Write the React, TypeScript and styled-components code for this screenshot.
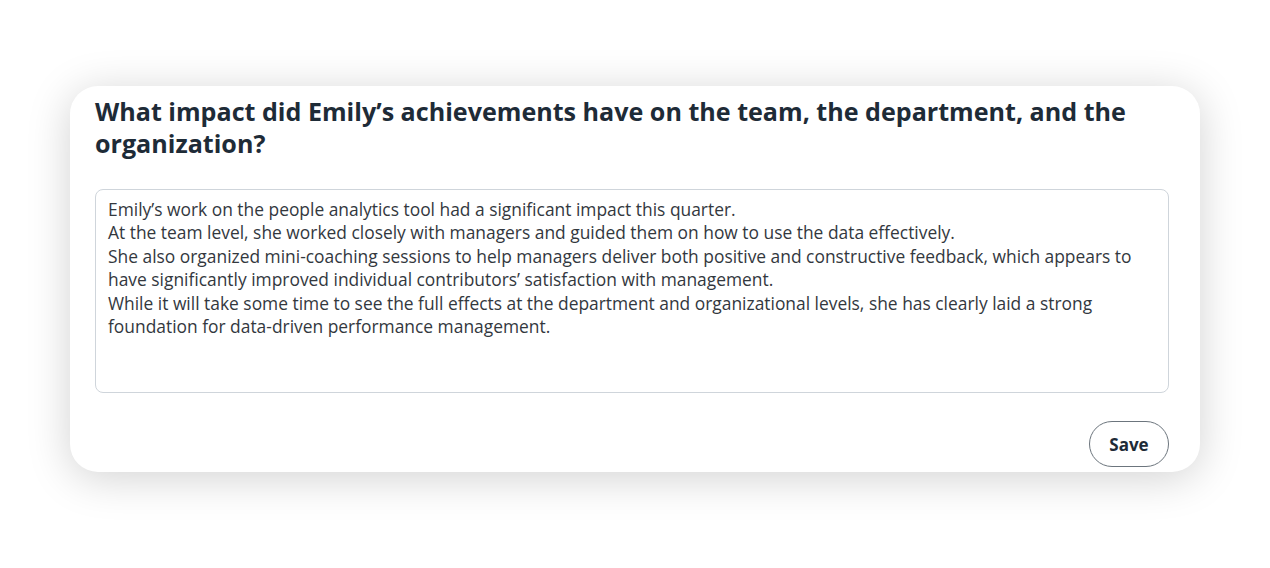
import styled, { createGlobalStyle } from "styled-components";

const GlobalStyle = createGlobalStyle`
	html, body {
		margin: 0;
		padding: 0;
		background: #ffffff;
	}
	body {
		font-family: "Open Sans", "Liberation Sans", sans-serif;
	}
`;

const answer = [
	"Emily’s work on the people analytics tool had a significant impact this quarter.",
	"At the team level, she worked closely with managers and guided them on how to use the data effectively.",
	"She also organized mini-coaching sessions to help managers deliver both positive and constructive feedback, which appears to",
	"have significantly improved individual contributors’ satisfaction with management.",
	"While it will take some time to see the full effects at the department and organizational levels, she has clearly laid a strong",
	"foundation for data-driven performance management.",
].join("\n");

export default function App() {
	return (
		<Page>
			<GlobalStyle />
			<Card>
				<Question>
					What impact did Emily’s achievements have on the team, the department, and the
					organization?
				</Question>
				<Answer defaultValue={answer} spellCheck={false} />
				<Footer>
					<SaveButton type="button">Save</SaveButton>
				</Footer>
			</Card>
		</Page>
	);
}

const Page = styled.div`
	width: 1270px;
	height: 568px;
	box-sizing: border-box;
	padding: 86px 70px 0;
	background: #ffffff;
	overflow: hidden;
`;

const Card = styled.section`
	width: 1130px;
	height: 386px;
	box-sizing: border-box;
	padding: 9px 31px 5px 25px;
	background: #ffffff;
	border-radius: 28px;
	box-shadow: 0 6px 44px rgba(0, 0, 0, 0.18);
	display: flex;
	flex-direction: column;
`;

const Question = styled.h2`
	margin: 0;
	font-size: 25.1px;
	line-height: 32px;
	font-weight: 700;
	color: #1e2b37;
`;

const Answer = styled.textarea`
	margin-top: 30px;
	height: 204px;
	box-sizing: border-box;
	padding: 8px 4px 8px 12px;
	border: 1px solid #cfd5db;
	border-radius: 8px;
	resize: none;
	outline: none;
	overflow: hidden;
	font-family: "Open Sans", "Liberation Sans", sans-serif;
	font-size: 17.4px;
	line-height: 23.4px;
	color: #33383e;
	background: #ffffff;
`;

const Footer = styled.div`
	margin-top: 28px;
	display: flex;
	justify-content: flex-end;
`;

const SaveButton = styled.button`
	width: 80px;
	height: 46px;
	border: 1.5px solid #6c757d;
	border-radius: 23px;
	background: #ffffff;
	font-family: "Open Sans", "Liberation Sans", sans-serif;
	font-size: 17px;
	font-weight: 700;
	color: #1e2b37;
	cursor: pointer;
`;
